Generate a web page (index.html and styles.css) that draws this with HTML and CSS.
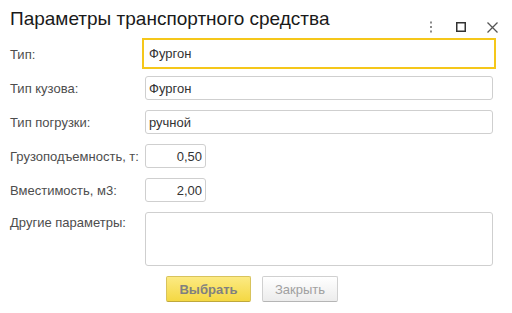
FILE: index.html
```html
<!DOCTYPE html>
<html lang="ru">
<head>
<meta charset="utf-8">
<title>Параметры транспортного средства</title>
<link rel="stylesheet" href="styles.css">
</head>
<body>
<div class="window">
  <header class="titlebar">
    <h1 class="title">Параметры транспортного средства</h1>
    <div class="controls">
      <svg class="icon icon-more" width="4" height="12" viewBox="0 0 4 12"><rect x="1" y="0.5" width="2" height="2" fill="#8a8a8a"/><rect x="1" y="5" width="2" height="2" fill="#8a8a8a"/><rect x="1" y="9.5" width="2" height="2" fill="#8a8a8a"/></svg>
      <svg class="icon icon-max" width="10" height="10" viewBox="0 0 10 10"><rect x="0.75" y="0.75" width="8.5" height="8.5" fill="none" stroke="#333" stroke-width="1.5"/></svg>
      <svg class="icon icon-close" width="11" height="11" viewBox="0 0 11 11"><path d="M0.5 0.5 L10.5 10.5 M10.5 0.5 L0.5 10.5" stroke="#555" stroke-width="1.3" fill="none"/></svg>
    </div>
  </header>
  <form class="form">
    <div class="row">
      <label class="label">Тип:</label>
      <input class="field field--focus" value="Фургон">
    </div>
    <div class="row">
      <label class="label">Тип кузова:</label>
      <input class="field" value="Фургон">
    </div>
    <div class="row">
      <label class="label">Тип погрузки:</label>
      <input class="field" value="ручной">
    </div>
    <div class="row">
      <label class="label">Грузоподъемность, т:</label>
      <input class="field field--num" value="0,50">
    </div>
    <div class="row">
      <label class="label">Вместимость, м3:</label>
      <input class="field field--num" value="2,00">
    </div>
    <div class="row row--top">
      <label class="label label--top">Другие параметры:</label>
      <textarea class="field field--area"></textarea>
    </div>
  </form>
  <div class="buttons">
    <button class="btn btn--primary" type="button">Выбрать</button>
    <button class="btn btn--secondary" type="button">Закрыть</button>
  </div>
</div>
</body>
</html>
```

FILE: styles.css
```css
* { box-sizing: border-box; }
html, body { margin: 0; padding: 0; background: #fff; }
body {
  font-family: "Liberation Sans", Arial, sans-serif;
  color: #333;
  width: 512px;
  height: 313px;
  overflow: hidden;
}
.titlebar {
  display: flex;
  align-items: flex-start;
  justify-content: space-between;
  height: 42px;
  padding: 8px 14px 0 10px;
}
.title {
  margin: 0;
  font-size: 19px;
  line-height: 22px;
  font-weight: normal;
  color: #1a1a1a;
}
.controls {
  display: flex;
  align-items: center;
  height: 12px;
  margin-top: 13px;
}
.icon { display: block; }
.icon-more { margin-right: 23px; }
.icon-max { margin-right: 21px; }

.form {
  display: flex;
  flex-direction: column;
  gap: 10px;
  padding: 0 19px 0 10px;
}
.row {
  display: flex;
  align-items: center;
  height: 24px;
}
.row--top {
  align-items: flex-start;
  height: 54px;
}
.label {
  flex: 0 0 135px;
  font-size: 13px;
  line-height: 15px;
  color: #4d4d4d;
}
.label--top { padding-top: 3px; }
.field {
  display: block;
  flex: 1 1 auto;
  min-width: 0;
  height: 24px;
  margin: 0;
  padding: 0 3px;
  border: 1px solid #cfcfcf;
  border-radius: 3px;
  background: #fff;
  font-family: inherit;
  font-size: 13px;
  color: #333;
  outline: none;
}
.field--focus {
  height: 31px;
  margin: -4px -3px -3px -3px;
  padding: 0 5px;
  border: 2px solid #f5c71a;
  border-radius: 0;
}
.field--num {
  flex: 0 0 61px;
  width: 61px;
  text-align: right;
}
.field--area {
  height: 54px;
  resize: none;
}

.buttons {
  display: flex;
  gap: 11px;
  padding: 10px 0 0 166px;
}
.btn {
  height: 26px;
  margin: 0;
  border-radius: 2px;
  font-family: inherit;
  font-size: 13px;
  padding: 0;
}
.btn--primary {
  width: 85px;
  background: linear-gradient(#fcea83, #f4d843);
  border: 1px solid #d8c35c;
  border-bottom-color: #bfa83c;
  color: #808080;
  font-weight: bold;
}
.btn--secondary {
  width: 76px;
  background: linear-gradient(#ffffff, #ececec);
  border: 1px solid #d0d0d0;
  border-bottom-color: #b5b5b5;
  color: #a0a0a0;
}
```
